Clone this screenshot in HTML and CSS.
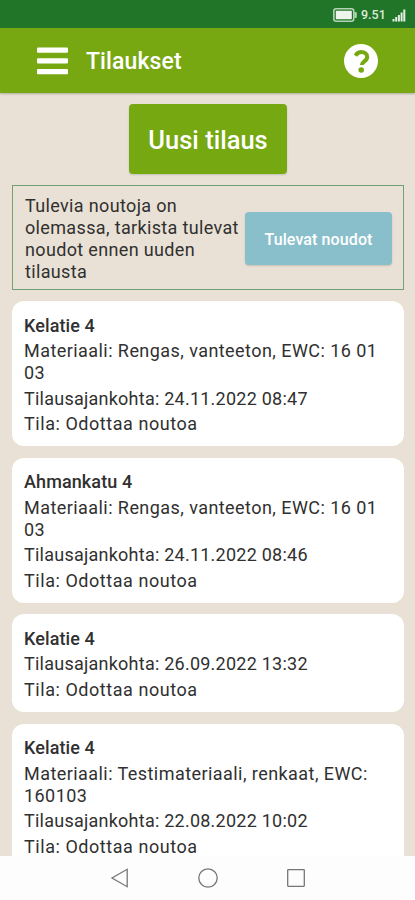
FILE: index.html
```
<!DOCTYPE html>
<html lang="fi">
	<head>
		<meta charset="UTF-8">
		<meta name="viewport" content="width=device-width, initial-scale=1">
		<title>Tilaukset</title>
		<link rel="stylesheet" href="styles.css">
	</head>
	<body>
		<div class="screen">
			<div class="status">
				<svg class="battery" viewBox="0 0 24 14" width="24" height="14">
					<rect x="0.8" y="0.8" width="20" height="12.4" rx="2.5" fill="none" stroke="#b4d3b6" stroke-width="1.6"/>
					<rect x="2.8" y="2.8" width="16" height="8.4" rx="0.8" fill="#eef5ec"/>
					<path d="M21.5 4h1.2q1.1 0 1.1 1.1v3.8q0 1.1-1.1 1.1h-1.2z" fill="#b4d3b6"/>
				</svg>
				<span class="clock">9.51</span>
				<svg class="signal" viewBox="0 0 14 13" width="14" height="13" fill="#e3efe2">
					<rect x="0.5" y="10" width="2" height="2.5"/>
					<rect x="3.2" y="8" width="2" height="4.5"/>
					<rect x="5.9" y="6" width="2" height="6.5"/>
					<rect x="8.6" y="3.5" width="2" height="9"/>
					<rect x="11.3" y="0.5" width="2" height="12"/>
				</svg>
			</div>
			<header class="header">
				<svg class="menu" viewBox="0 0 31 28" width="31" height="28" fill="#fff">
					<rect x="0" y="0.5" width="31" height="5.3" rx="1"/>
					<rect x="0" y="11.2" width="31" height="5.3" rx="1"/>
					<rect x="0" y="22" width="31" height="5.3" rx="1"/>
				</svg>
				<h1>Tilaukset</h1>
				<svg class="help" viewBox="0 0 34 34" width="34" height="34">
					<circle cx="17" cy="17" r="17" fill="#fff"/>
					<path d="M11.5 11.7C13 9 15 8.1 17.2 8.1c3.3 0 6 1.9 6 4.9 0 4.4-5.4 4.4-5.4 8.1" fill="none" stroke="#77a812" stroke-width="4"/>
					<circle cx="17.2" cy="26" r="2.8" fill="#77a812"/>
				</svg>
			</header>
			<main class="content">
				<button class="new-order">Uusi tilaus</button>
				<div class="notice">
					<p>Tulevia noutoja on olemassa, tarkista tulevat noudot ennen uuden tilausta</p>
					<button class="pickups">Tulevat noudot</button>
				</div>
				<div class="card">
					<h2>Kelatie 4</h2>
					<p class="material">Materiaali: Rengas, vanteeton, EWC: 16 01 03</p>
					<p class="time">Tilausajankohta: 24.11.2022 08:47</p>
					<p>Tila: Odottaa noutoa</p>
				</div>
				<div class="card">
					<h2>Ahmankatu 4</h2>
					<p class="material">Materiaali: Rengas, vanteeton, EWC: 16 01 03</p>
					<p class="time">Tilausajankohta: 24.11.2022 08:46</p>
					<p>Tila: Odottaa noutoa</p>
				</div>
				<div class="card">
					<h2>Kelatie 4</h2>
					<p class="time">Tilausajankohta: 26.09.2022 13:32</p>
					<p>Tila: Odottaa noutoa</p>
				</div>
				<div class="card">
					<h2>Kelatie 4</h2>
					<p class="material">Materiaali: Testimateriaali, renkaat, EWC: 160103</p>
					<p class="time">Tilausajankohta: 22.08.2022 10:02</p>
					<p>Tila: Odottaa noutoa</p>
				</div>
			</main>
			<nav class="navbar">
				<svg viewBox="0 0 20 20" width="20" height="20"><path d="M17.2 1.3v17.4L2 10z"/></svg>
				<svg viewBox="0 0 20 20" width="20" height="20"><circle cx="10" cy="10" r="9.2"/></svg>
				<svg viewBox="0 0 20 20" width="20" height="20"><rect x="1.7" y="1.7" width="16.6" height="16.6" rx="0.5"/></svg>
			</nav>
		</div>
	</body>
</html>
```
FILE: styles.css
```
* {margin: 0; padding: 0; border: none; box-sizing: border-box;}
body {
	font-family: Roboto, "Liberation Sans", sans-serif;
	color: #303030;
	background: #e9e1d5;
}
.screen {
	height: 900px;
	display: flex;
	flex-direction: column;
	overflow: hidden;
}
.status {
	height: 28px;
	flex: none;
	padding: 2px 9px 0 0;
	display: flex;
	justify-content: flex-end;
	align-items: center;
	background: #217528;
}
.clock {
	width: 25px;
	margin: 0 6px 0 4px;
	font-size: 12.5px;
	font-weight: 500;
	line-height: 14px;
	color: #dcebdc;
	white-space: nowrap;
}
.header {
	height: 65px;
	flex: none;
	padding: 0 37px;
	display: flex;
	align-items: center;
	background: #77a812;
	box-shadow: 0 1px 2px rgba(0,0,0,0.25);
	z-index: 1;
}
.header h1 {
	flex: 1;
	margin-left: 18px;
	padding-top: 3px;
	font-size: 23px;
	line-height: 28px;
	font-weight: 500;
	letter-spacing: 0.1px;
	color: #fff;
}
.content {
	flex: 1;
	min-height: 0;
	padding: 11px 11px 0 12px;
	overflow: hidden;
}
button {
	display: block;
	font-family: inherit;
	font-weight: 500;
	color: #fff;
	white-space: nowrap;
}
.new-order {
	width: 158px;
	height: 70px;
	margin: 0 auto 11px;
	padding-top: 2px;
	border-radius: 4px;
	background: #75a811;
	box-shadow: 0 1px 2px rgba(0,0,0,0.15);
	font-size: 25.5px;
}
.notice {
	height: 105px;
	padding: 2px 11px 0 12px;
	display: flex;
	align-items: center;
	border: 1px solid #73a075;
}
.notice p {
	flex: 1;
	font-size: 18px;
	line-height: 22px;
	letter-spacing: 0.35px;
}
.pickups {
	width: 147px;
	height: 53px;
	flex: none;
	padding-top: 1px;
	border-radius: 4px;
	background: #89bfcb;
	box-shadow: 0 1px 2px rgba(0,0,0,0.15);
	font-size: 16px;
	letter-spacing: 0.1px;
}
.card {
	margin-top: 11.7px;
	padding: 13.5px 12px 11px;
	border-radius: 12px;
	background: #fff;
	font-size: 18px;
	line-height: 22px;
}
.notice + .card {
	margin-top: 11px;
}
.card h2 {
	font-size: 18px;
	font-weight: 500;
	letter-spacing: 0.1px;
}
.card p {
	margin-top: 3.5px;
	letter-spacing: 0.55px;
}
.card .material {
	letter-spacing: 0.44px;
}
.card .time {
	letter-spacing: 0.24px;
}
.navbar {
	height: 44px;
	flex: none;
	display: flex;
	justify-content: center;
	align-items: center;
	gap: 68px;
	background: #fdfdfd;
}
.navbar svg {
	fill: none;
	stroke: #777;
	stroke-width: 1.3;
}
```
